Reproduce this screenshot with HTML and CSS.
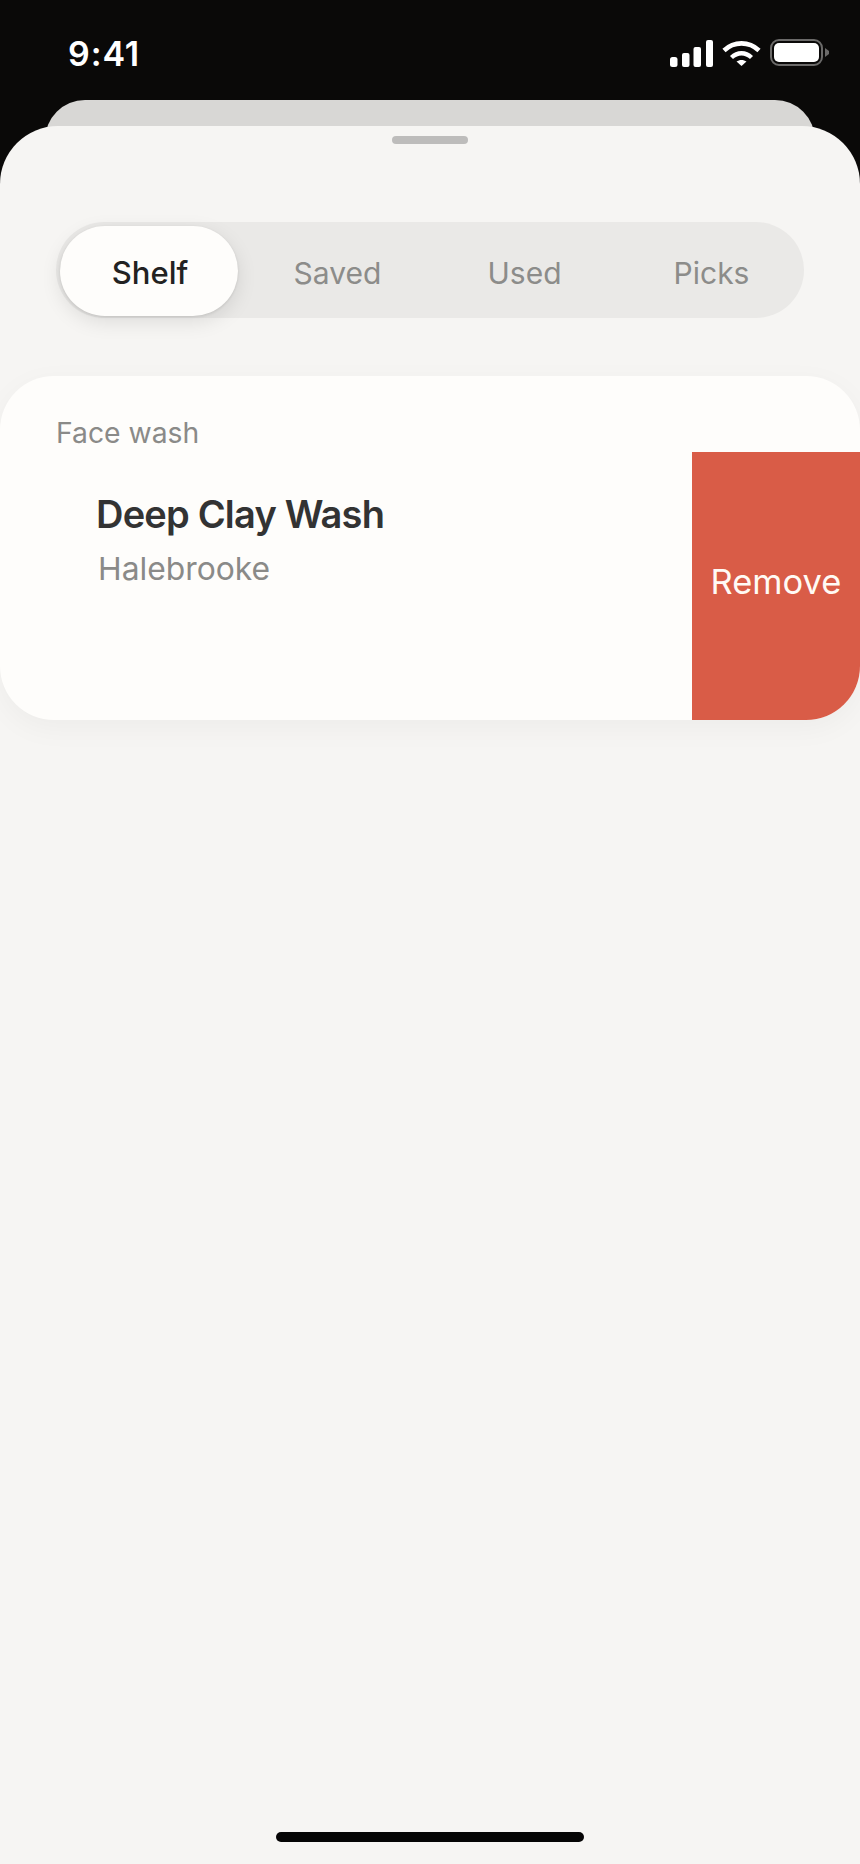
FILE: index.html
```html
<!DOCTYPE html>
<html lang="en">
<head>
<meta charset="utf-8">
<title>Shelf</title>
<link rel="stylesheet" href="styles.css">
</head>
<body>
<div class="phone">
  <header class="status">
    <span class="time">9:41</span>
    <div class="status-icons">
      <svg class="signal" width="43" height="27" viewBox="0 0 43 27">
        <rect x="0" y="17" width="7.5" height="10" rx="2.5"/>
        <rect x="12" y="13" width="7.5" height="14" rx="2"/>
        <rect x="23.5" y="7" width="7.5" height="20" rx="2"/>
        <rect x="36" y="0" width="7" height="27" rx="2"/>
      </svg>
      <svg class="wifi" width="39" height="26" viewBox="0 0 39 26">
        <path d="M2 10.5C12 1 27 1 37 10.5" fill="none" stroke="#fff" stroke-width="4.6"/>
        <path d="M9.5 17.5C15.5 11.8 23.5 11.8 29.5 17.5" fill="none" stroke="#fff" stroke-width="4.4"/>
        <path d="M14.5 21.5C17.5 19.4 21.5 19.4 24.5 21.5L19.5 26Z" fill="#fff"/>
      </svg>
      <div class="battery"><span class="battery-fill"></span></div>
      <svg class="nub" width="4" height="9" viewBox="0 0 4 9"><path d="M0 0L4 3V6L0 9Z" fill="#6b6a69"/></svg>
    </div>
  </header>
  <div class="peek"></div>
  <main class="sheet">
    <div class="grabber"></div>
    <nav class="tabs">
      <button class="tab tab-active">Shelf</button>
      <button class="tab">Saved</button>
      <button class="tab">Used</button>
      <button class="tab">Picks</button>
    </nav>
    <section class="card">
      <div class="card-label">Face wash</div>
      <div class="row">
        <div class="row-text">
          <div class="row-title">Deep Clay Wash</div>
          <div class="row-brand">Halebrooke</div>
        </div>
        <div class="remove">Remove</div>
      </div>
    </section>
    <div class="home-bar"></div>
  </main>
</div>
</body>
</html>
```
FILE: styles.css
```css
* { box-sizing: border-box; }
html, body { margin: 0; padding: 0; }
body { background: #0a0908; font-family: Inter, "Liberation Sans", sans-serif; }
.phone {
  width: 860px;
  height: 1864px;
  display: flex;
  flex-direction: column;
  background: #0a0908;
  overflow: hidden;
}
.status {
  height: 100px;
  flex: none;
  display: flex;
  justify-content: space-between;
  padding: 35px 31px 0 68px;
  color: #fff;
}
.time { font-size: 34px; font-weight: 600; line-height: 38px; letter-spacing: 0.9px; }
.status-icons { display: flex; align-items: flex-start; padding-top: 4px; }
.signal { fill: #fff; margin-top: 1px; }
.wifi { margin-left: 9px; margin-top: 1px; }
.battery {
  margin-left: 9px;
  width: 53px;
  height: 27px;
  border: 2.5px solid #6b6a69;
  border-radius: 9px;
  padding: 2px;
  display: flex;
}
.battery-fill { flex: 1; background: #fff; border-radius: 5px; }
.nub { margin-left: 2px; margin-top: 9px; }
.peek {
  flex: none;
  height: 60px;
  margin: 0 45px -34px;
  background: #d8d7d5;
  border-radius: 40px 40px 0 0;
}
.sheet {
  position: relative;
  flex: 1;
  display: flex;
  flex-direction: column;
  background: #f6f5f3;
  border-radius: 58px 58px 0 0;
}
.grabber {
  width: 76px;
  height: 8px;
  margin: 10px auto 0;
  border-radius: 4px;
  background: #bdbcbb;
}
.tabs {
  display: grid;
  grid-template-columns: repeat(4, 187px);
  align-items: center;
  height: 96px;
  margin: 78px 0 0 56px;
  width: 748px;
  background: #eae9e7;
  border-radius: 48px;
}
.tab {
  border: 0;
  padding: 5px 0 0 2px;
  height: 90px;
  background: none;
  font: 400 30px Inter, "Liberation Sans", sans-serif;
  color: #8c8c8a;
}
.tab-active {
  width: 178px;
  margin: 2px 0 0 4px;
  padding: 3px 0 0 2px;
  background: #fefdfb;
  color: #222;
  font-size: 31px;
  font-weight: 500;
  border-radius: 45px;
  box-shadow: 0 6px 20px rgba(0, 0, 0, 0.1), 0 1px 3px rgba(0, 0, 0, 0.1);
}
.card {
  margin-top: 58px;
  height: 344px;
  display: flex;
  flex-direction: column;
  background: #fefdfb;
  border-radius: 54px;
  overflow: hidden;
  box-shadow: 0 8px 30px rgba(0, 0, 0, 0.04);
}
.card-label {
  height: 76px;
  padding: 41px 0 0 56px;
  font-size: 28.3px;
  line-height: 33px;
  color: #8a8a88;
}
.row { flex: 1; display: flex; }
.row-text { flex: 1; padding: 40px 0 0 96px; }
.row-title { font-size: 38px; font-weight: 600; line-height: 44px; letter-spacing: -0.8px; color: #333; }
.row-brand { margin: 13px 0 0 2px; font-size: 31.8px; line-height: 40px; color: #8a8a88; }
.remove {
  width: 168px;
  display: flex;
  align-items: center;
  justify-content: center;
  padding-bottom: 9px;
  background: #d95c47;
  color: #fffaf5;
  font-size: 34.5px;
}
.home-bar {
  width: 308px;
  height: 10px;
  margin: auto auto 22px;
  border-radius: 5px;
  background: #050505;
}
```
